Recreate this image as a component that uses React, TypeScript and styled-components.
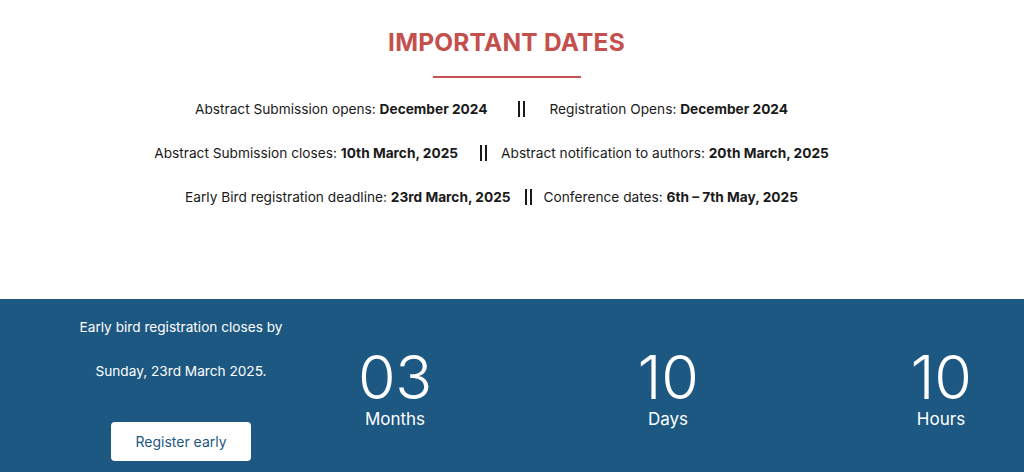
import React from "react";
import styled, { createGlobalStyle } from "styled-components";

const GlobalStyle = createGlobalStyle`
  html, body { margin: 0; padding: 0; background: #ffffff; }
  body { font-family: Inter, "Noto Sans", Arial, sans-serif; color: #1a1a1a; overflow: hidden; }
`;

const Page = styled.div`
  width: 1024px;
  height: 472px;
  display: flex;
  flex-direction: column;
`;

const DatesSection = styled.section`
  height: 299px;
  display: flex;
  flex-direction: column;
  align-items: center;
  padding: 27px 11px 0 0;
  box-sizing: border-box;
`;

const Title = styled.h2`
  margin: 0;
  font-size: 24.5px;
  line-height: 30px;
  font-weight: 700;
  color: #c4504e;
  letter-spacing: 0.2px;
`;

const Rule = styled.div`
  width: 148px;
  height: 2px;
  background: #c9514f;
  margin-top: 19px;
`;

const Rows = styled.div`
  margin-top: 18.5px;
  display: flex;
  flex-direction: column;
  gap: 20px;
  align-self: stretch;
  padding-right: 30px;
`;

const Row = styled.div`
  display: flex;
  justify-content: center;
  align-items: center;
  font-size: 13.7px;
  line-height: 24px;
  color: #1a1a1a;
  white-space: nowrap;
`;

const Sep = styled.span<{ $l: number; $r: number }>`
  display: inline-block;
  width: 7px;
  height: 16px;
  margin: 0 ${(p) => p.$r}px 0 ${(p) => p.$l}px;
  border-left: 2.5px solid #1a1a1a;
  border-right: 2.5px solid #1a1a1a;
  box-sizing: border-box;
`;

const Countdown = styled.section`
  flex: 1;
  background: #1d5882;
  display: flex;
  padding-left: 38px;
  color: #ffffff;
`;

const Lead = styled.div`
  width: 286px;
  display: flex;
  flex-direction: column;
  align-items: center;
  padding-top: 18px;
  font-size: 13.65px;
  line-height: 20px;
`;

const LeadLine = styled.p`
  margin: 0 0 24px;
`;

const Button = styled.a`
  margin-top: 17px;
  width: 140px;
  height: 39px;
  background: #ffffff;
  border-radius: 4px;
  color: #1d5882;
  display: flex;
  align-items: center;
  justify-content: center;
  font-size: 14px;
  text-decoration: none;
`;

const Units = styled.div`
  display: flex;
  margin-left: 31px;
  gap: 193px;
  padding-top: 53px;
`;

const Unit = styled.div`
  width: 80px;
  display: flex;
  flex-direction: column;
  align-items: center;
`;

const Num = styled.div`
  font-size: 61px;
  font-weight: 300;
  line-height: 50px;
  letter-spacing: -0.3px;
`;

const Label = styled.div`
  font-size: 17px;
  line-height: 22px;
  margin-top: 6px;
`;

const rows = [
  { a: "Abstract Submission opens: ", ab: "December 2024", b: "Registration Opens: ", bb: "December 2024", l: 31, r: 24 },
  { a: "Abstract Submission closes: ", ab: "10th March, 2025", b: "Abstract notification to authors: ", bb: "20th March, 2025", l: 22, r: 14 },
  { a: "Early Bird registration deadline: ", ab: "23rd March, 2025", b: "Conference dates: ", bb: "6th – 7th May, 2025", l: 14, r: 12 },
];

const units = [
  { n: "03", l: "Months" },
  { n: "10", l: "Days" },
  { n: "10", l: "Hours" },
];

export default function App() {
  return (
    <Page>
      <GlobalStyle />
      <DatesSection>
        <Title>IMPORTANT DATES</Title>
        <Rule />
        <Rows>
          {rows.map((r, i) => (
            <Row key={i}>
              <span>
                {r.a}
                <b>{r.ab}</b>
              </span>
              <Sep $l={r.l} $r={r.r} />
              <span>
                {r.b}
                <b>{r.bb}</b>
              </span>
            </Row>
          ))}
        </Rows>
      </DatesSection>
      <Countdown>
        <Lead>
          <LeadLine>Early bird registration closes by</LeadLine>
          <LeadLine>Sunday, 23rd March 2025.</LeadLine>
          <Button href="#">Register early</Button>
        </Lead>
        <Units>
          {units.map((u) => (
            <Unit key={u.l}>
              <Num>{u.n}</Num>
              <Label>{u.l}</Label>
            </Unit>
          ))}
        </Units>
      </Countdown>
    </Page>
  );
}
